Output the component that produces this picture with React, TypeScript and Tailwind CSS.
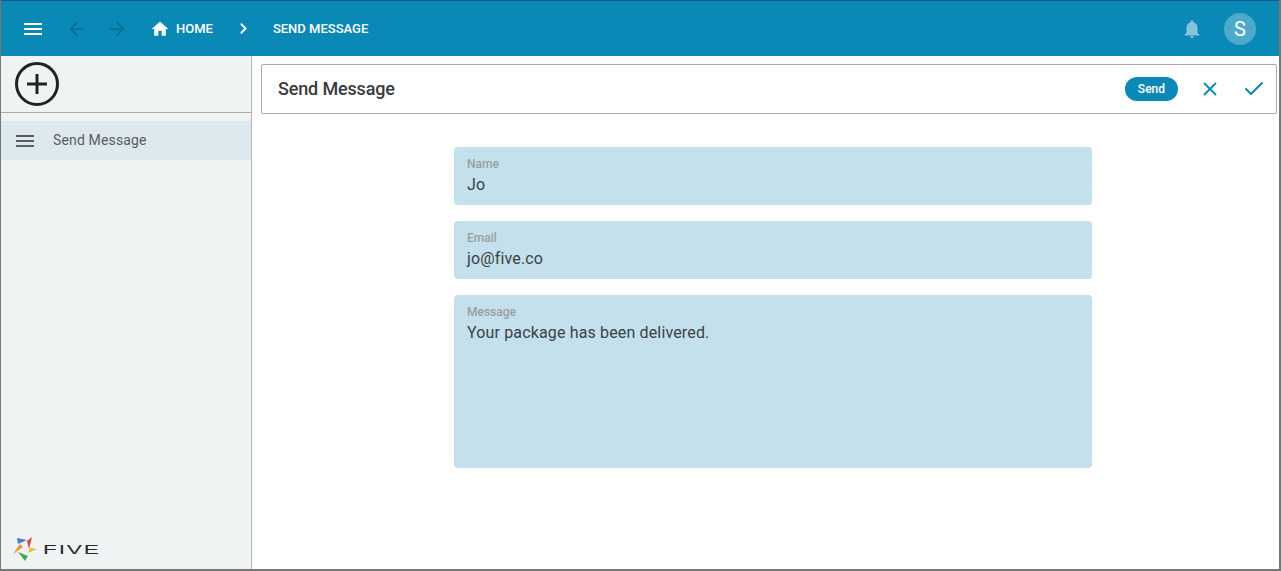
import { ArrowLeft, ArrowRight, Check, ChevronRight, X } from 'lucide-react'

function MenuIcon({ className }: { className: string }) {
  return (
    <svg viewBox="0 0 24 24" className={className} fill="currentColor">
      <path d="M3 18h18v-2H3v2zm0-5h18v-2H3v2zm0-7v2h18V6H3z" />
    </svg>
  )
}

function Field({ label, value, tall }: { label: string; value: string; tall?: boolean }) {
  return (
    <div className={`bg-[#c3e0ec] rounded-[4px] px-[13px] pt-[9px] ${tall ? 'h-[173px]' : 'h-[58px]'}`}>
      <div className="text-[12px] leading-[16px] font-medium text-[#9a9fa2]">{label}</div>
      <div className="mt-[1px] text-[16px] leading-[24px] tracking-[0.15px] text-[#3a4246]">{value}</div>
    </div>
  )
}

function Logo() {
  return (
    <div className="flex items-center">
      <svg viewBox="0 0 24 24" className="w-[24px] h-[24px]">
        <polygon points="4,1 14,3 5,7" fill="#3f7fd8" />
        <polygon points="19,0 14,4 16,12" fill="#e0453a" />
        <polygon points="24,12 15,16 17,11" fill="#f2b632" />
        <polygon points="0,17 7,7 10,10" fill="#f08a35" />
        <polygon points="12,24 5,15 15,19" fill="#46a84f" />
      </svg>
      <span className="ml-[6px] font-['Liberation_Sans',sans-serif] text-[13px] leading-none tracking-[1px] text-[#2a2a2a] origin-left scale-x-[1.75] inline-block">FIVE</span>
    </div>
  )
}

export default function App() {
  return (
    <div className="h-screen flex flex-col border-l border-r-2 border-b-2 border-[#777] font-['Roboto',sans-serif] bg-white overflow-hidden">
      <header className="h-[56px] shrink-0 bg-[#0b89b6] border-t border-[#0a5f80] flex items-center text-white">
        <MenuIcon className="w-[24px] h-[24px] ml-[20px]" />
        <ArrowLeft className="w-[22px] h-[22px] ml-[21px] text-[#0a6c90]" strokeWidth={1.8} />
        <ArrowRight className="w-[22px] h-[22px] ml-[18px] text-[#0a6c90]" strokeWidth={1.8} />
        <svg viewBox="0 0 24 24" className="w-[20px] h-[20px] ml-[22px]" fill="currentColor">
          <path d="M10 20v-6h4v6h5v-8h3L12 3 2 12h3v8z" />
        </svg>
        <span className="ml-[6px] text-[13px] font-medium">HOME</span>
        <ChevronRight className="w-[17px] h-[17px] ml-[22px]" strokeWidth={2.5} />
        <span className="ml-[21px] text-[13px] font-medium">SEND MESSAGE</span>
        <svg viewBox="0 0 24 24" className="w-[22px] h-[22px] ml-auto text-[#85c5dc]" fill="currentColor">
          <path d="M12 22c1.100 0 2-.9 2-2h-4c0 1.100.9 2 2 2zm6-6v-5c0-3.070-1.640-5.640-4.500-6.320V4c0-.830-.670-1.500-1.500-1.500s-1.500.670-1.500 1.500v.680C7.630 5.360 6 7.920 6 11v5l-2 2v1h16v-1l-2-2z" />
        </svg>
        <div className="w-[32px] h-[32px] ml-[21px] mr-[23px] rounded-full bg-[#4fa9ca] flex items-center justify-center text-[20px]">S</div>
      </header>
      <div className="flex-1 flex min-h-0">
        <aside className="w-[250px] shrink-0 bg-[#eff3f4] flex flex-col">
          <div className="h-[57px] shrink-0 border-b border-[#aaa] flex items-center pl-[13px]">
            <svg viewBox="0 0 46 46" className="w-[46px] h-[46px] text-[#222]" fill="none" stroke="currentColor">
              <circle cx="23" cy="23" r="20.500" strokeWidth="3" />
              <path d="M13 23h20M23 13v20" strokeWidth="3" />
            </svg>
          </div>
          <div className="h-[39px] mt-[8px] shrink-0 bg-[#dde9ee] flex items-center pl-[12px] text-[#5a5d5f]">
            <MenuIcon className="w-[24px] h-[24px]" />
            <span className="ml-[16px] text-[14px] tracking-[0.15px]">Send Message</span>
          </div>
          <div className="mt-auto pl-[12px] pb-[8px]">
            <Logo />
          </div>
        </aside>
        <main className="flex-1 min-w-0 border-l border-[#b5b5b5] pl-[9px] pr-[2px] pt-[8px]">
          <div className="h-[50px] border border-[#aaa] rounded-[2px] flex items-center pl-[16px] pr-[10px]">
            <span className="text-[18px] leading-[24px] -mt-[1px] font-medium tracking-[-0.15px] text-[#3b3b3b]">Send Message</span>
            <span className="ml-auto h-[24px] px-[13px] rounded-full bg-[#0b89b6] text-white text-[12px] font-medium flex items-center">Send</span>
            <X className="w-[22px] h-[22px] ml-[21px] text-[#0b89b6]" strokeWidth={2} />
            <Check className="w-[24px] h-[24px] ml-[21px] text-[#0b89b6]" strokeWidth={2} />
          </div>
          <div className="w-[638px] ml-[193px] mt-[33px] flex flex-col gap-[16px]">
            <Field label="Name" value="Jo" />
            <Field label="Email" value="jo@five.co" />
            <Field label="Message" value="Your package has been delivered." tall />
          </div>
        </main>
      </div>
    </div>
  )
}
